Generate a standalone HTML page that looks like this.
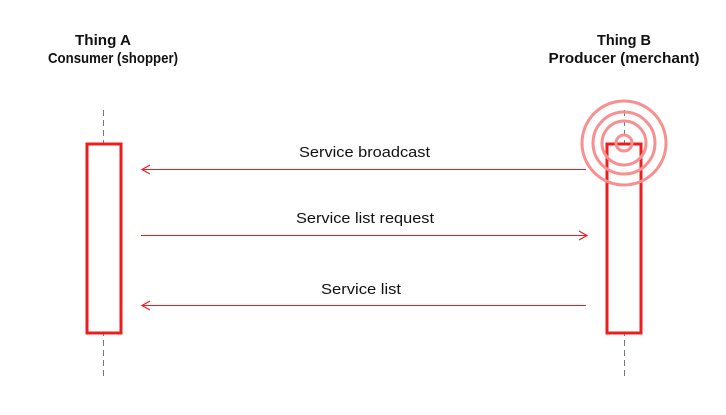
<!DOCTYPE html>
<html><head><style>html,body{margin:0;padding:0;background:#fff;}</style></head>
<body>
<svg width="726" height="415" xmlns="http://www.w3.org/2000/svg" style="display:block">
<g font-family="Liberation Sans, sans-serif" font-size="15" fill="#111" text-anchor="middle" font-weight="bold">
<text x="103" y="45" textLength="56" lengthAdjust="spacingAndGlyphs">Thing A</text>
<text x="113" y="63" textLength="130" lengthAdjust="spacingAndGlyphs">Consumer (shopper)</text>
<text x="624" y="45" textLength="54" lengthAdjust="spacingAndGlyphs">Thing B</text>
<text x="624" y="63" textLength="151" lengthAdjust="spacingAndGlyphs">Producer (merchant)</text>
</g>
<g stroke="#777" stroke-width="1" stroke-dasharray="6,4">
<line x1="103.5" y1="110" x2="103.5" y2="380"/>
<line x1="624.5" y1="110" x2="624.5" y2="380"/>
</g>
<g fill="#fff" stroke="#ee1c1c" stroke-width="3">
<rect x="87" y="144" width="34" height="189"/>
<rect x="607" y="144" width="34" height="189"/>
</g>
<g fill="none" stroke="#f79090" stroke-width="3">
<circle cx="624" cy="143" r="8"/>
<circle cx="624" cy="143" r="22"/>
<circle cx="624" cy="143" r="31"/>
<circle cx="624" cy="143" r="42"/>
</g>
<g fill="#ee1c1c">
<rect x="142" y="169" width="444" height="1"/>
<rect x="141" y="235" width="446" height="1"/>
<rect x="142" y="305" width="444" height="1"/>
</g>
<g stroke="#ee1c1c" stroke-width="1.2" fill="none">
<polyline points="150,165 142,169.5 150,174"/>
<polyline points="579,231 587,235.5 579,240"/>
<polyline points="150,301 142,305.5 150,310"/>
</g>
<g font-family="Liberation Sans, sans-serif" font-size="15" fill="#111" text-anchor="middle">
<text x="364.5" y="157" textLength="131" lengthAdjust="spacingAndGlyphs">Service broadcast</text>
<text x="365" y="223" textLength="138" lengthAdjust="spacingAndGlyphs">Service list request</text>
<text x="361" y="294" textLength="80" lengthAdjust="spacingAndGlyphs">Service list</text>
</g>
</svg>
</body></html>
